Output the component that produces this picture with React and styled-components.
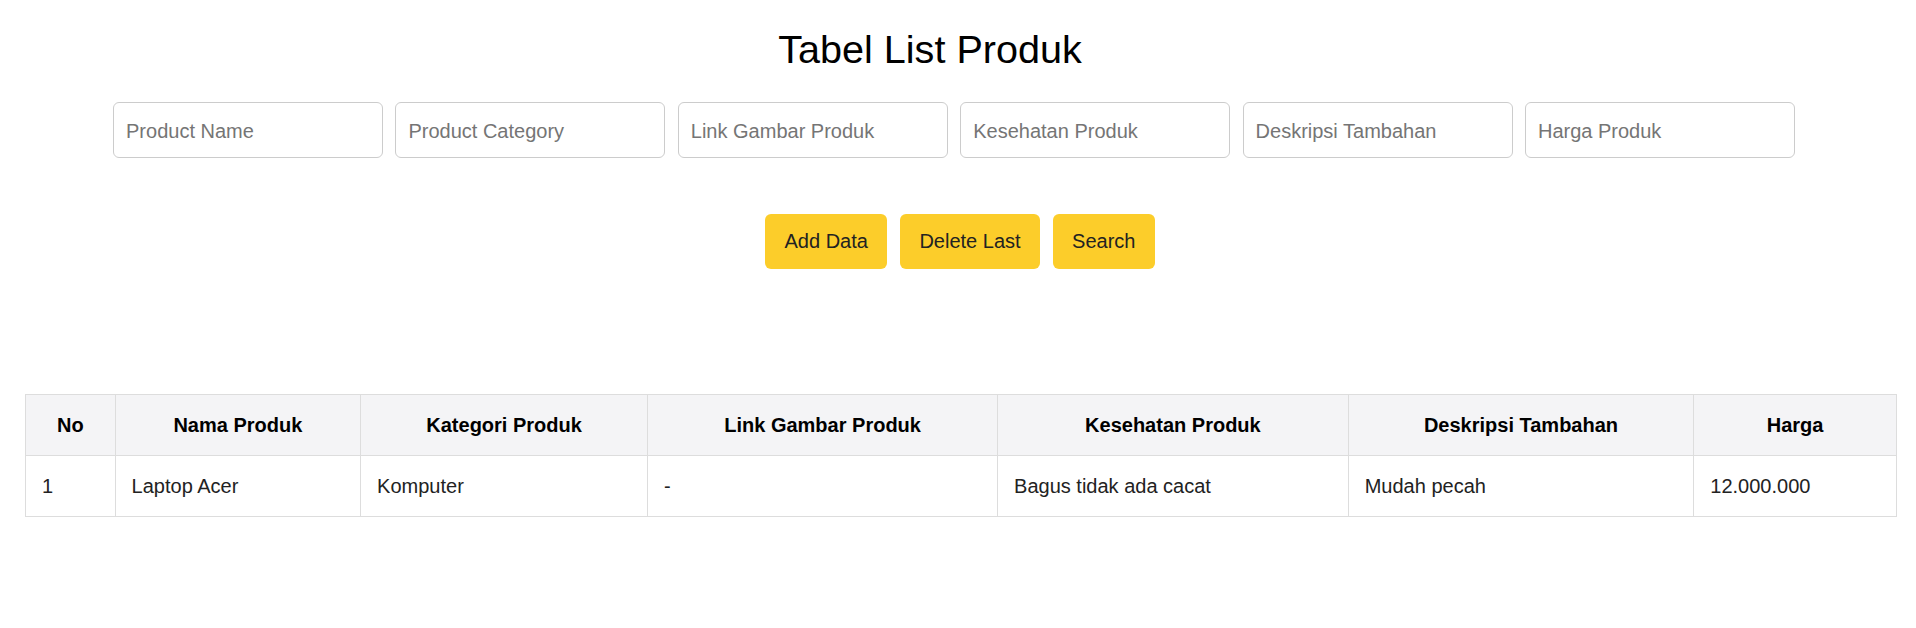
import React, { useState } from 'react';
import styled, { createGlobalStyle } from 'styled-components';

const GlobalStyle = createGlobalStyle`
  body {
    margin: 0;
    background: #fff;
    font-family: "Liberation Sans", Arial, sans-serif;
  }
`;

const Page = styled.div`
  display: flex;
  flex-direction: column;
  align-items: center;
`;

const Title = styled.h1`
  margin: 26px 0 0;
  padding-right: 56px;
  font-size: 39.6px;
  line-height: 46px;
  font-weight: 400;
  color: #000;
`;

const InputRow = styled.div`
  display: flex;
  gap: 12.4px;
  margin-top: 30px;
  padding-right: 8px;
`;

const Field = styled.input`
  box-sizing: border-box;
  width: 270px;
  height: 56px;
  padding: 2px 12px 0;
  border: 1px solid #ccc;
  border-radius: 6px;
  font-family: inherit;
  font-size: 20px;
  color: #222;
  outline: none;
  &::placeholder {
    color: #757575;
  }
`;

const ButtonRow = styled.div`
  display: flex;
  gap: 12.5px;
  margin-top: 56px;
  padding-left: 4px;
`;

const ActionButton = styled.button`
  height: 55px;
  padding: 0 19.5px;
  border: none;
  border-radius: 6px;
  background: #fccd2a;
  color: #222;
  font-family: inherit;
  font-size: 20px;
  cursor: pointer;
`;

const TableWrap = styled.div`
  align-self: stretch;
  margin-top: 125px;
  padding: 0 21px 0 25px;
`;

const Table = styled.table`
  width: 100%;
  border-collapse: collapse;
  table-layout: fixed;
  font-size: 20px;
`;

const Th = styled.th`
  padding: 16px;
  line-height: 28px;
  background: #f4f4f6;
  border: 1px solid #ddd;
  color: #000;
  font-weight: 700;
  text-align: center;
`;

const Td = styled.td`
  padding: 16px;
  line-height: 28px;
  border: 1px solid #ddd;
  color: #222;
  text-align: left;
`;

const columns = [
  { label: 'No', width: 89.6 },
  { label: 'Nama Produk', width: 245.5 },
  { label: 'Kategori Produk', width: 287 },
  { label: 'Link Gambar Produk', width: 350 },
  { label: 'Kesehatan Produk', width: 350.6 },
  { label: 'Deskripsi Tambahan', width: 345.6 },
  { label: 'Harga', width: 202.6 },
];

const placeholders = [
  'Product Name',
  'Product Category',
  'Link Gambar Produk',
  'Kesehatan Produk',
  'Deskripsi Tambahan',
  'Harga Produk',
];

export default function App() {
  const [rows] = useState([
    ['1', 'Laptop Acer', 'Komputer', '-', 'Bagus tidak ada cacat', 'Mudah pecah', '12.000.000'],
  ]);

  return (
    <>
      <GlobalStyle />
      <Page>
        <Title>Tabel List Produk</Title>
        <InputRow>
          {placeholders.map(p => <Field key={p} placeholder={p} />)}
        </InputRow>
        <ButtonRow>
          <ActionButton>Add Data</ActionButton>
          <ActionButton>Delete Last</ActionButton>
          <ActionButton>Search</ActionButton>
        </ButtonRow>
        <TableWrap>
          <Table>
            <colgroup>
              {columns.map(c => <col key={c.label} style={{ width: c.width }} />)}
            </colgroup>
            <thead>
              <tr>
                {columns.map(c => <Th key={c.label}>{c.label}</Th>)}
              </tr>
            </thead>
            <tbody>
              {rows.map((row, ndx) => (
                <tr key={ndx}>
                  {row.map((cell, i) => <Td key={i}>{cell}</Td>)}
                </tr>
              ))}
            </tbody>
          </Table>
        </TableWrap>
      </Page>
    </>
  );
}
